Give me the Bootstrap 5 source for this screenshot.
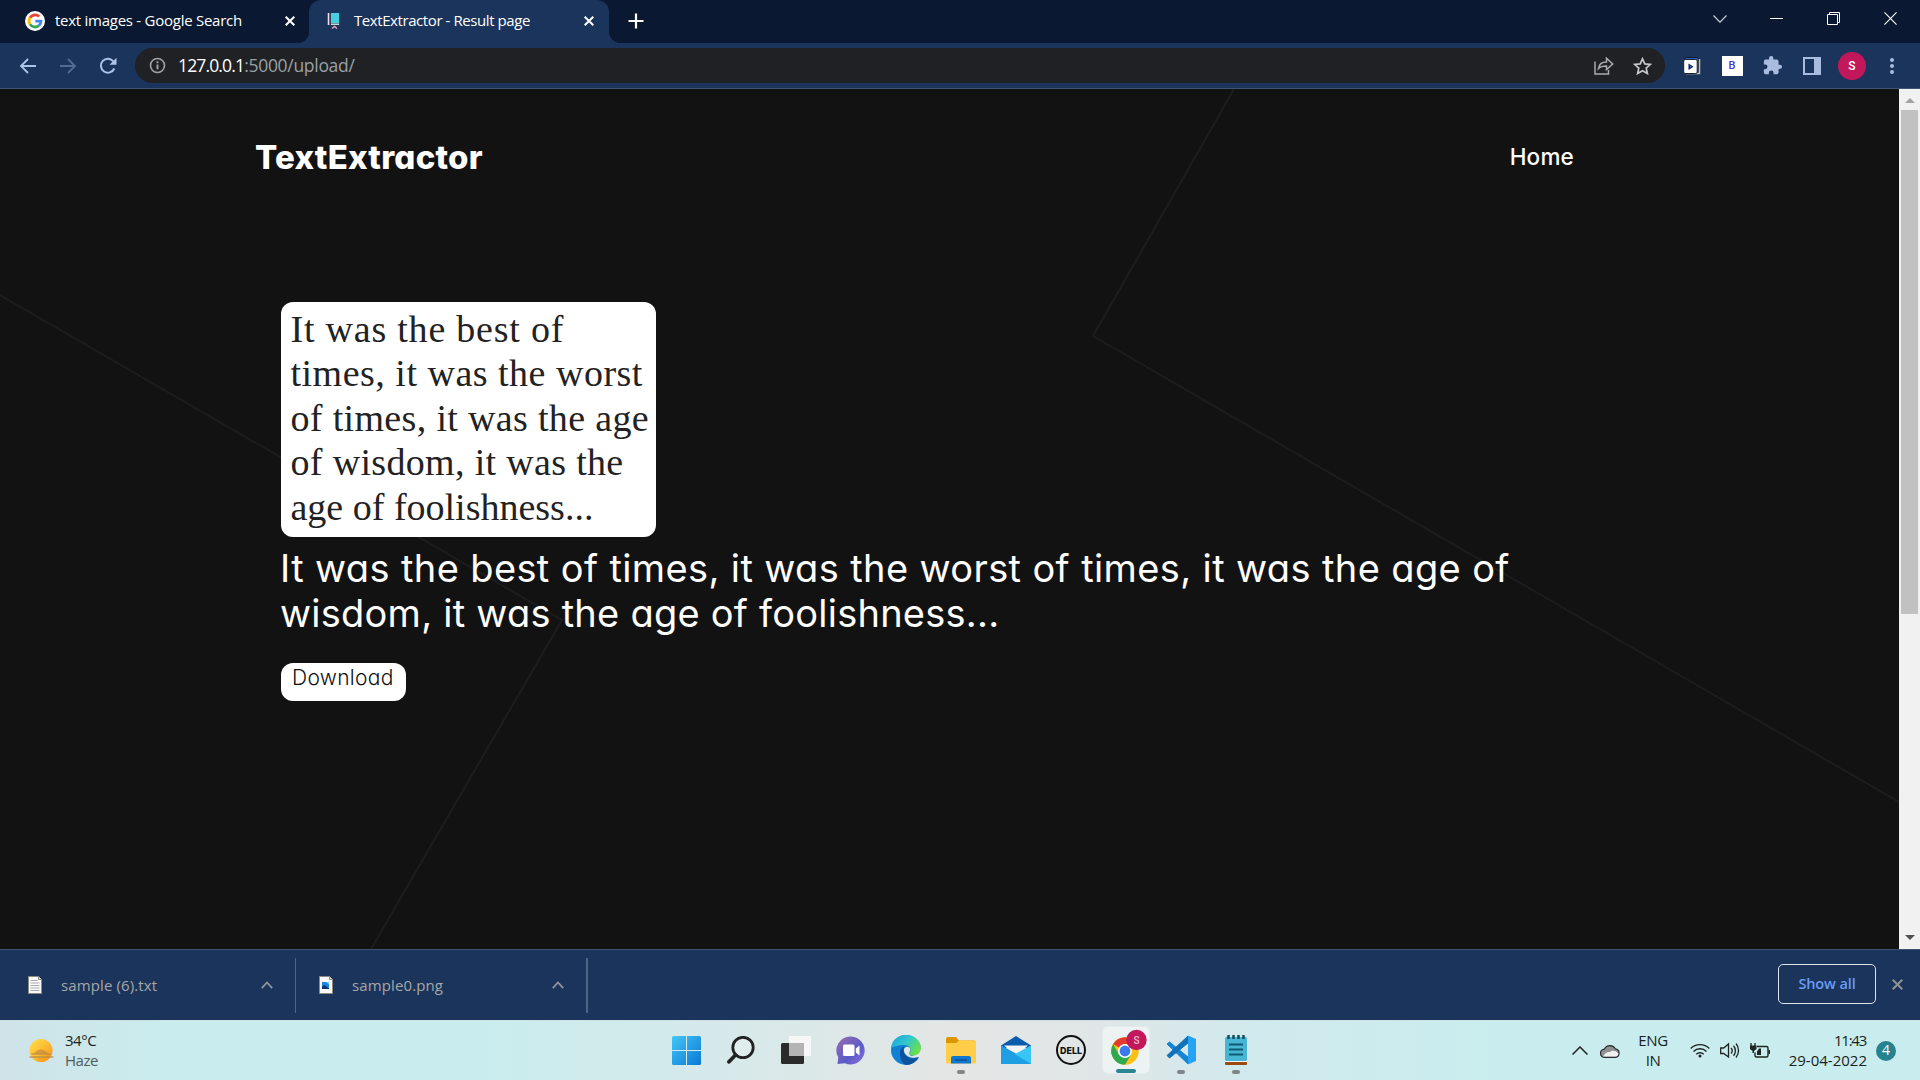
<!DOCTYPE html>
<html lang="en">
<head>
<meta charset="utf-8">
<title>TextExtractor - Result page</title>
<link href="https://cdn.jsdelivr.net/npm/bootstrap@5.3.0/dist/css/bootstrap.min.css" rel="stylesheet">
<style>
body{width:1920px;height:1080px;overflow:hidden;font-family:"Open Sans","Noto Sans",sans-serif;background:#121212;line-height:1.2}
svg{display:block;flex:none}
.txt{white-space:nowrap;display:inline-block}
.tabstrip{height:43px;background:#0a1931;color:#fff;font-size:15px}
.tab-a{width:309px;padding-left:25px;padding-right:14px;height:41px}
.tab-a .txt{margin-left:10px;letter-spacing:-.26px;padding-bottom:1px}
.tab-b{width:300px;height:43px;background:#1a345b;border-radius:12px 12px 0 0;padding:0 15px 2px 17px;position:relative}
.tab-b .txt{margin-left:12px;letter-spacing:-.42px;padding-bottom:1px}
.tab-b::before,.tab-b::after{content:"";position:absolute;bottom:0;width:12px;height:12px}
.tab-b::before{left:-12px;background:radial-gradient(circle at 0 0,transparent 12px,#1a345b 12.5px)}
.tab-b::after{right:-12px;background:radial-gradient(circle at 100% 0,transparent 12px,#1a345b 12.5px)}
.newtab{padding-left:19px;padding-bottom:1px}
.winbtns{padding-right:1px}
.winbtn{width:57px;height:37px}
.toolbar{height:46px;background:#1a345b;border-bottom:1px solid #3c5473;padding-left:8px;padding-right:8px}
.cell{width:40px;height:36px}
.omni{width:1530px;height:35px;background:#202124;border-radius:18px;margin:0 7px;padding-left:14px;padding-right:4px;font-size:17.5px;color:#fff}
.omni .hostname{margin-left:12px;letter-spacing:-.85px}
.omni .dim{color:#9aa0a6;letter-spacing:-.3px}
.ico-share{margin-right:19px}
.ico-star{margin-right:9px}
.ext-b{width:21px;height:20px;font:500 11px Roboto,sans-serif;color:#4338ca}
.ava{width:28px;height:28px;border-radius:50%;background:#c2185b;color:#fff;font:500 12px Roboto,sans-serif}
.view{height:860px}
.site{width:1899px;background:#121212;color:#fff;font-family:Inter,sans-serif;font-feature-settings:"cv11";position:relative}
.bglines{position:absolute;left:0;top:0;z-index:0}
.site>*:not(.bglines){position:relative;z-index:1}
.head{padding:49px 325px 0 255px;height:213px}
.brandname{font-size:33px;font-weight:800;line-height:38px;letter-spacing:.25px}
.homelink{font-size:22.500px;font-weight:500;line-height:37px;letter-spacing:.2px}
.result{padding-left:281px}
.scan{width:375px;height:235px;background:#fff;border-radius:12px;color:#222;font-family:"Liberation Serif",serif;font-size:38px;line-height:44.400px;padding:5px 0 0 9.500px}
.s1{letter-spacing:.78px}.s2{letter-spacing:.5px}.s3{letter-spacing:.34px}.s4{letter-spacing:.33px}
.out{font-size:38px;line-height:45px;margin-top:9px;color:#fff}
.out .o1{letter-spacing:.38px;margin-left:-1px}
.out .o2{letter-spacing:.24px;margin-left:-1px}
.dl{width:125px;height:38px;border-radius:12px;background:#fff;color:#111;font-size:21px;font-weight:300;line-height:24px;margin-top:27px;padding:3px 0 0 11px;letter-spacing:.3px}
.sbar{width:21px;background:#f1f1f1}
.arr-up{margin-top:9px}
.arr-dn{margin-bottom:9px}
.thumb{width:17px;height:504px;background:#c1c1c1;margin-top:7px}
.shelf{height:71px;background:#1a345b;border-top:1px solid #3c5473;color:#a5a7a8;font-size:15px}
.ditem{width:295px;padding-left:28px;padding-right:22px;height:70px}
.ditem .txt{margin-left:19px;letter-spacing:.12px}
.ditem.second{width:290px;padding-left:23px;padding-right:22px}
.vline{width:1px;height:55px;background:#4d6584}
.vline.end{width:2px}
.showall{width:98px;height:40px;border:1px solid #dfe3ea;border-radius:5px;color:#669df6;font-weight:600;font-size:14.500px;letter-spacing:-.12px;margin-bottom:2px}
.shelf-x{margin:0 17px 2px 16px}
.taskbar{height:60px;border-top:1px solid #cddfe1;background:linear-gradient(90deg,#cfe3e8 0,#c9edee 180px,#c9edee 480px,#d3eaeb 660px,#e4e6e5 960px,#e0e6e7 1100px,#d0eaed 1260px,#c9edee 1500px,#c9edee 100%);font-size:15px;color:#1b1f20}
.sunico{margin-left:28px}
.two{line-height:20px;padding-bottom:2px}
.weather{margin-left:9px;width:35px;letter-spacing:-.48px}
.weather .sub{color:#505b5d}
.apps{padding-left:562px;padding-bottom:1px;gap:7px}
.tb{width:48px;height:48px;position:relative}
.tb.on{background:#edf3f3;border-radius:5px;border:1px solid #e4eced}
.tb.on svg{overflow:visible}
.tb.run::after{content:"";position:absolute;bottom:0;left:20px;width:8px;height:4px;border-radius:2px;background:#7f8686}
.tb.on::after{content:"";position:absolute;bottom:0;left:13px;width:20px;height:4px;border-radius:2px;background:#2a8593}
.tray{padding-right:24px}
.ico-cloud{margin-left:12px}
.lang{margin-left:15px;width:36px;letter-spacing:-.4px}
.ico-wifi{margin-left:19px}
.ico-sys{margin-left:10px}
.clock{margin-left:16px;width:81px}
.clock .hm{letter-spacing:-1.250px;padding-right:1px}
.note{width:20px;height:20px;border-radius:50%;background:#26828f;color:#fff;font-size:14px;margin-left:9px}
</style>
<script src="https://cdn.jsdelivr.net/npm/bootstrap@5.3.0/dist/js/bootstrap.bundle.min.js"></script>
</head>
<body>
<div class="tabstrip d-flex">
  <div class="tab-a d-flex align-items-center">
    <svg width="20" height="20" viewBox="0 0 20 20"><circle cx="10" cy="10" r="10" fill="#fff"/><g fill="none" stroke-width="2.8"><path d="M14.2 5.6A6 6 0 0 0 4.9 6.9" stroke="#ea4335"/><path d="M4.9 6.9a6 6 0 0 0 0 6.2" stroke="#fbbc05"/><path d="M4.9 13.1a6 6 0 0 0 9 1.5" stroke="#34a853"/><path d="M13.9 14.6A6 6 0 0 0 16 10.2H10.3" stroke="#4285f4"/></g></svg>
    <span class="txt">text images - Google Search</span>
    <svg class="ms-auto" width="10" height="10" viewBox="0 0 10 10" stroke="#fff" stroke-width="2"><path d="M.7.7l8.600 8.600M9.300.7L.7 9.300"/></svg>
  </div>
  <div class="tab-b d-flex align-items-center">
    <svg width="16" height="18" viewBox="0 0 16 18"><path d="M1.500 1h13v12.500h-13z" fill="#35405c"/><path d="M2.500 1v12" stroke="#f0dfe6" stroke-width="1.500"/><path d="M5 1h8v10H5z" fill="#46cfdc"/><path d="M5 12.200h8" stroke="#d9f5f7" stroke-width="1.300"/><path d="M6 16.500l2.500-2 2.500 2" stroke="#e9a4b8" fill="none" stroke-width="1.500"/></svg>
    <span class="txt">TextExtractor - Result page</span>
    <svg class="ms-auto" width="10" height="10" viewBox="0 0 10 10" stroke="#fff" stroke-width="2"><path d="M.7.7l8.600 8.600M9.300.7L.7 9.300"/></svg>
  </div>
  <div class="newtab d-flex align-items-center"><svg width="16" height="16" viewBox="0 0 16 16" stroke="#fff" stroke-width="2.200"><path d="M8 .5v15M.5 8h15"/></svg></div>
  <div class="winbtns d-flex ms-auto">
    <div class="winbtn d-flex align-items-center justify-content-center"><svg width="14" height="8" viewBox="0 0 14 8" fill="none" stroke="#c6cbd3" stroke-width="1.200"><path d="M.5.5L7 7.200 13.500.5"/></svg></div>
    <div class="winbtn d-flex align-items-center justify-content-center"><svg width="13" height="2"><path d="M0 .5h13" stroke="#fff"/></svg></div>
    <div class="winbtn d-flex align-items-center justify-content-center"><svg width="13" height="13" viewBox="0 0 13 13" fill="none" stroke="#fff"><path d="M.5 2.500h10v10H.5zM2.500 2.500V.5h10v10h-2"/></svg></div>
    <div class="winbtn d-flex align-items-center justify-content-center"><svg width="13" height="13" viewBox="0 0 14 14" stroke="#fff" stroke-width="1.200"><path d="M.5.5l13 13M13.500.5l-13 13"/></svg></div>
  </div>
</div>
<div class="toolbar d-flex align-items-center">
  <div class="cell d-flex align-items-center justify-content-center"><svg width="18" height="16" viewBox="0 0 18 16" fill="none" stroke="#aec3e8" stroke-width="1.800"><path d="M17 8H2M9 1L2 8l7 7"/></svg></div>
  <div class="cell d-flex align-items-center justify-content-center"><svg width="18" height="16" viewBox="0 0 18 16" fill="none" stroke="#536c94" stroke-width="1.800"><path d="M1 8h15M9 1l7 7-7 7"/></svg></div>
  <div class="cell d-flex align-items-center justify-content-center"><svg width="18" height="18" viewBox="0 0 18 18" fill="none" stroke="#aec3e8" stroke-width="2"><path d="M15.300 11.500A7 7 0 1 1 14.500 4.500L16 6.500"/><path d="M17.500.8v7h-7z" fill="#aec3e8" stroke="none"/></svg></div>
  <div class="omni d-flex align-items-center">
    <svg width="17" height="17" viewBox="0 0 17 17" fill="none" stroke="#a0a4a8" stroke-width="1.600"><circle cx="8.500" cy="8.500" r="7"/><path d="M8.500 7.500v4.700M8.500 4.300v1.900" stroke-width="1.900"/></svg>
    <span class="txt hostname">127.0.0.1</span><span class="txt dim">:5000/upload/</span>
    <svg class="ms-auto ico-share" width="20" height="18" viewBox="0 0 20 18" fill="none" stroke="#a9abad" stroke-width="1.500"><path d="M1 4.500V17h13.500v-4"/><path d="M4.500 11.500c.5-4 3.500-6.500 8-6.500V1.200L18.700 7l-6.200 5.500V9c-4 0-6.500.7-8 2.500z"/></svg>
    <svg class="ico-star" width="19" height="18" viewBox="0 0 19 18" fill="none" stroke="#c5c7c9" stroke-width="1.700"><path d="M9.500 1.800l2.300 5.100 5.600.5-4.200 3.700 1.200 5.400-4.900-2.800-4.900 2.800 1.200-5.400-4.200-3.700 5.600-.5z"/></svg>
  </div>
  <div class="cell d-flex align-items-center justify-content-center"><svg width="18" height="18" viewBox="0 0 18 18"><rect x="1.500" y=".5" width="14" height="14" rx="2" fill="#2b5fc4" stroke="#111c2c"/><path d="M16.500 2v14.500H3" stroke="#c8bfae" stroke-width="1.500" fill="none"/><rect x=".7" y="2.500" width="13.500" height="14" rx="1.500" fill="#fff" stroke="#16202f"/><path d="M5.500 6.500v6.500l5-3.200z" fill="#12203a"/><path d="M6.800 8.500v2.600l2-1.300z" fill="#2b6fe0"/></svg></div>
  <div class="cell d-flex align-items-center justify-content-center"><div class="ext-b bg-white d-flex align-items-center justify-content-center">B</div></div>
  <div class="cell d-flex align-items-center justify-content-center"><svg width="19" height="19" viewBox="1 1 22 22" fill="#a9bcdf"><path d="M20.500 11H19V7a2 2 0 0 0-2-2h-4V3.500a2.500 2.500 0 0 0-5 0V5H4a2 2 0 0 0-2 2v3.800h1.500a2.700 2.700 0 0 1 0 5.400H2V20a2 2 0 0 0 2 2h3.800v-1.500a2.700 2.700 0 0 1 5.400 0V22H17a2 2 0 0 0 2-2v-4h1.500a2.500 2.500 0 0 0 0-5z"/></svg></div>
  <div class="cell d-flex align-items-center justify-content-center"><svg width="18" height="18" viewBox="0 0 18 18"><path d="M1 1h16v16H1z" fill="none" stroke="#a9bcdf" stroke-width="2"/><path d="M11 1v16h6V1z" fill="#a9bcdf"/></svg></div>
  <div class="cell d-flex align-items-center justify-content-center"><div class="ava d-flex align-items-center justify-content-center">S</div></div>
  <div class="cell d-flex align-items-center justify-content-center"><svg width="4" height="16" viewBox="0 0 4 16" fill="#a9bcdf"><circle cx="2" cy="2" r="2"/><circle cx="2" cy="8" r="2"/><circle cx="2" cy="14" r="2"/></svg></div>
</div>
<div class="view d-flex">
  <main class="site">
    <svg class="bglines" width="1899" height="860" fill="none" stroke="#1d1d1d" stroke-width="2"><path d="M1234 0L1093 247 1899 713M0 206L562 531 371 860"/></svg>
    <header class="head d-flex justify-content-between align-items-start">
      <span class="txt brandname">TextExtractor</span>
      <a class="txt homelink text-white text-decoration-none" href="#">Home</a>
    </header>
    <section class="result">
      <div class="scan">
        <div><span class="txt s1">It was the best of</span></div>
        <div><span class="txt s2">times, it was the worst</span></div>
        <div><span class="txt s3">of times, it was the age</span></div>
        <div><span class="txt s4">of wisdom, it was the</span></div>
        <div><span class="txt">age of foolishness...</span></div>
      </div>
      <div class="out">
        <div><span class="txt o1">It was the best of times, it was the worst of times, it was the age of</span></div>
        <div><span class="txt o2">wisdom, it was the age of foolishness...</span></div>
      </div>
      <div class="dl"><span class="txt">Download</span></div>
    </section>
  </main>
  <div class="sbar d-flex flex-column align-items-center">
    <svg class="arr-up" width="10" height="5"><path d="M0 5L5 0l5 5z" fill="#a3a3a3"/></svg>
    <div class="thumb"></div>
    <svg class="mt-auto arr-dn" width="10" height="5"><path d="M0 0h10L5 5z" fill="#505050"/></svg>
  </div>
</div>
<div class="shelf d-flex align-items-center">
  <div class="ditem d-flex align-items-center">
    <svg width="14" height="18" viewBox="0 0 14 18"><path d="M.5.5h10l3 3v14H.5z" fill="#fafafa" stroke="#8d8a80"/><path d="M10.500.5v3h3" fill="#ddd" stroke="#8d8a80"/><path d="M2.500 4.500h7M2.500 7h9M2.500 9.500h9M2.500 12h9M2.500 14.500h9" stroke="#aaa"/></svg>
    <span class="txt">sample (6).txt</span>
    <svg class="ms-auto" width="12" height="8" viewBox="0 0 12 8" fill="none" stroke="#929699" stroke-width="1.800"><path d="M.8 7.200L6 1.500l5.200 5.700"/></svg>
  </div>
  <div class="vline"></div>
  <div class="ditem second d-flex align-items-center">
    <svg width="14" height="18" viewBox="0 0 14 18"><path d="M.5.5h10l3 3v14H.5z" fill="#fafafa" stroke="#8d8a80"/><path d="M10.500.5v3h3" fill="#ddd" stroke="#8d8a80"/><path d="M3 6h7v7H3z" fill="#1b86dc"/><path d="M3 13v-2.500L5.500 9l4.500 3.500v.5z" fill="#0a3478"/><path d="M7 6h3v2.500z" fill="#6fd0f5"/></svg>
    <span class="txt">sample0.png</span>
    <svg class="ms-auto" width="12" height="8" viewBox="0 0 12 8" fill="none" stroke="#929699" stroke-width="1.800"><path d="M.8 7.200L6 1.500l5.200 5.700"/></svg>
  </div>
  <div class="vline end"></div>
  <div class="showall d-flex align-items-center justify-content-center ms-auto"><span class="txt">Show all</span></div>
  <svg class="shelf-x" width="11" height="11" viewBox="0 0 11 11" stroke="#8f9290" stroke-width="2"><path d="M.7.7l9.600 9.600M10.300.7L.7 10.300"/></svg>
</div>
<div class="taskbar d-flex align-items-center">
  <svg class="sunico" width="28" height="28" viewBox="0 0 28 28"><defs><linearGradient id="sun" x1="0" y1="0" x2="1" y2="1"><stop offset="0" stop-color="#ffe04a"/><stop offset=".5" stop-color="#fdbd33"/><stop offset="1" stop-color="#f98a06"/></linearGradient></defs><circle cx="13" cy="13.500" r="11.500" fill="url(#sun)"/><path d="M5 16.500c3-1 4-4 8-4s5 3 8 4z" fill="#c08a3e" opacity=".7"/><path d="M4 17h18M2 20h23" stroke="#b98b4b" stroke-width="1.500" stroke-linecap="round" opacity=".8"/></svg>
  <div class="two weather"><div><span class="txt">34°C</span></div><div class="sub"><span class="txt">Haze</span></div></div>
  <div class="apps d-flex">
    <div class="tb d-flex align-items-center justify-content-center"><svg width="29" height="29" viewBox="0 0 29 29"><defs><linearGradient id="win" x1="0" y1="0" x2="1" y2="1"><stop offset="0" stop-color="#45c6f8"/><stop offset="1" stop-color="#0a78d4"/></linearGradient></defs><path d="M0 1.500Q0 0 1.500 0H14v14H0zM15 0h12.500Q29 0 29 1.500V14H15zM0 15h14v14H1.500Q0 29 0 27.500zM15 15h14v12.500q0 1.500-1.500 1.500H15z" fill="url(#win)"/></svg></div>
    <div class="tb d-flex align-items-center justify-content-center"><svg width="28" height="28" viewBox="0 0 28 28" fill="none" stroke="#232323"><circle cx="16" cy="11.500" r="10.200" stroke-width="2.800" fill="#e1eced"/><path d="M8.500 19L2 25.800" stroke-width="3.800" stroke-linecap="round"/></svg></div>
    <div class="tb d-flex align-items-center justify-content-center"><svg width="30" height="28" viewBox="0 0 30 28"><rect y="7" width="23" height="21" rx="1.500" fill="#2b2b2b"/><rect x="8" width="22" height="20" rx="1" fill="#f7f7f7"/><path d="M8 7h15v13H8z" fill="#b4b4b4"/></svg></div>
    <div class="tb d-flex align-items-center justify-content-center"><svg width="30" height="29" viewBox="0 0 30 29"><defs><linearGradient id="cht" x1="0" y1="0" x2="1" y2="1"><stop offset="0" stop-color="#9a6cae"/><stop offset=".6" stop-color="#5b5bc8"/><stop offset="1" stop-color="#8c74dd"/></linearGradient></defs><path d="M15 .5a14 14 0 1 1-6 26.800L1.500 28l.8-6.500A14 14 0 0 1 15 .5z" fill="url(#cht)"/><rect x="7" y="8.500" width="11.500" height="11.500" rx="1.500" fill="#fff"/><path d="M19.800 12.500l3.700-3v10l-3.700-3z" fill="#fff"/></svg></div>
    <div class="tb d-flex align-items-center justify-content-center"><svg width="30" height="30" viewBox="0 0 30 30"><defs><linearGradient id="ed1" x1="0" y1="0" x2="1" y2=".6"><stop offset="0" stop-color="#1b9ede"/><stop offset=".5" stop-color="#2fc6cf"/><stop offset="1" stop-color="#6be04c"/></linearGradient></defs><circle cx="15" cy="15" r="15" fill="#0f80d4"/><path d="M30 13v11l-9-4z" fill="#e3e7e6"/><path d="M0 13C1 5 7 0 15 0c9 0 15 6 15 13 0 5-4 7.500-8 7.500-3 0-4-1.500-3-3 2-4-1-7.500-6-7.500-6 0-11 2-13 3z" fill="url(#ed1)"/><path d="M9 18c0-4 2.500-6.500 4.500-6.800-3 4 0 11.300 7.500 12.300 3 .3 5.500-.8 7-2C25.500 27 20 30 15.500 30 11 29 9 23 9 18z" fill="#0d529c"/><path d="M13 14.500c.8-3.500 5.500-3.500 6.200-.5.500 2-1.500 3.500-.8 5.200.8 2 5 2.500 8.600 1l1 1.300c-8 3.500-15.500-1-15-7z" fill="#e3e7e6"/></svg></div>
    <div class="tb run d-flex align-items-center justify-content-center"><svg width="30" height="27" viewBox="0 0 30 27"><path d="M0 2Q0 0 2 0h8l3 3.500h15q2 0 2 2V10H0z" fill="#dc9600"/><path d="M0 6h10l3-2.500h15q2 0 2 1.500v20q0 1.500-1.500 1.500h-27Q0 26.500 0 25z" fill="#ffcd48"/><path d="M5 26.500V21q0-2 2-2h16q2 0 2 2v5.500z" fill="#1177ce"/><path d="M9 23h12" stroke="#0b4f96" stroke-width="1.500"/></svg></div>
    <div class="tb d-flex align-items-center justify-content-center"><svg width="30" height="28" viewBox="0 0 30 28"><path d="M0 9.500L15 0l15 9.500V12H0z" fill="#0b5cab"/><path d="M3 9.500h24L15 20z" fill="#f4f4f4"/><path d="M0 9.500l15 8L0 28z" fill="#1895df"/><path d="M30 9.500l-15 8L0 28h30z" fill="#38c5f4"/><path d="M0 9.500L30 28H0z" fill="#1e9fe4"/></svg></div>
    <div class="tb d-flex align-items-center justify-content-center"><svg width="30" height="30" viewBox="0 0 30 30"><circle cx="15" cy="15" r="14" fill="none" stroke="#111" stroke-width="2"/><text x="4" y="18.500" font-family="Inter,sans-serif" font-weight="800" font-size="9.500" textLength="22" lengthAdjust="spacingAndGlyphs" fill="#111">DELL</text></svg></div>
    <div class="tb on d-flex align-items-center justify-content-center"><svg width="36" height="36" viewBox="0 0 36 36"><circle cx="17" cy="19" r="13.800" fill="#fbc116"/><path d="M17 19L5.100 12A13.800 13.800 0 0 1 28.900 12H17z" fill="#e33b2e"/><path d="M5.100 12A13.800 13.800 0 0 0 17 32.800l6-10.300L11 22.500z" fill="#2da94f"/><circle cx="17" cy="19" r="7" fill="#fff"/><circle cx="17" cy="19" r="5.400" fill="#3a79ee"/><circle cx="28.500" cy="8" r="10.200" fill="#c2185b"/><text x="28.500" y="11.700" text-anchor="middle" font-family="Roboto,sans-serif" font-weight="500" font-size="10" fill="#f5b7cf">S</text></svg></div>
    <div class="tb run d-flex align-items-center justify-content-center"><svg width="30" height="30" viewBox="0 0 30 30"><path d="M1 9l2.500-2L22 22v7z" fill="#1485d1" stroke="#1485d1" stroke-linejoin="round"/><path d="M1 20.500l2.500 2.500L22 8V1z" fill="#0f72bb" stroke="#0f72bb" stroke-linejoin="round"/><path d="M22 .5l8 3.500v22l-8 3.500z" fill="#27a3f3"/></svg></div>
    <div class="tb run d-flex align-items-center justify-content-center"><svg width="22" height="30" viewBox="0 0 22 30"><path d="M0 27h22v2q0 1-1 1H1q-1 0-1-1z" fill="#9b4c0c"/><path d="M0 25h22v2H0z" fill="#f5f5f5"/><rect y="2" width="22" height="24" rx="1.500" fill="#46b6d4"/><path d="M4 9.500h14M4 14.500h14M4 19.500h14" stroke="#0e5a74" stroke-width="1.800"/><path d="M3.500 0v4M8.500 0v4M13.500 0v4M18.500 0v4" stroke="#174a5a" stroke-width="2.500"/></svg></div>
  </div>
  <div class="tray d-flex align-items-center ms-auto">
    <svg width="16" height="9" viewBox="0 0 16 9" fill="none" stroke="#222" stroke-width="1.500"><path d="M.5 8.500L8 1l7.500 7.500"/></svg>
    <svg class="ico-cloud" width="20" height="14" viewBox="0 0 20 14"><path d="M4.700 13.300a4.100 4.100 0 0 1-.3-8.200A6.200 6.200 0 0 1 15.300 4.800a4.300 4.300 0 0 1 .2 8.500z" fill="#8e9192" stroke="#2a2c2d" stroke-width="1.200"/><path d="M3 12.500c2-4 5-5 7-4.500 2-1.500 5-2 8.500 1.500-.5 2-1.500 3-3 3z" fill="#f0f0f0"/></svg>
    <div class="two lang text-center"><div><span class="txt">ENG</span></div><div><span class="txt">IN</span></div></div>
    <svg class="ico-wifi" width="20" height="15" viewBox="0 0 20 15" fill="none" stroke="#1f2323" stroke-width="1.400"><path d="M.7 5.500a13 13 0 0 1 18.600 0M3.500 8.500a9.200 9.200 0 0 1 13 0M6.300 11.300a5.300 5.300 0 0 1 7.400 0"/><circle cx="10" cy="13" r="1.500" fill="#1f2323" stroke="none"/></svg>
    <svg class="ico-sys" width="20" height="17" viewBox="0 0 20 17" fill="none" stroke="#1f2323" stroke-width="1.300"><path d="M.7 6h3L8.500 2v13L3.700 11.500h-3zM11 6a4 4 0 0 1 0 5.500M13.500 3.700a7.500 7.500 0 0 1 0 10M16 1.500a11 11 0 0 1 0 14"/></svg>
    <svg class="ico-sys" width="20" height="16" viewBox="0 0 20 16"><path d="M7 3.500h9.500q1.500 0 1.500 1.500v7.500q0 1.500-1.500 1.500h-10Q5 14 5 12.500V9.500" fill="none" stroke="#1f2323" stroke-width="1.400"/><path d="M18.500 7h1.500v4h-1.500zM7 12V8.500l2-3h2V12z" fill="#1f2323"/><path d="M1 0v3M5 0v3" stroke="#1f2323" stroke-width="1.300"/><path d="M0 2.500h6.500V6L4 8v2H2.500V8L0 6z" fill="#1f2323"/></svg>
    <div class="two clock text-end"><div><span class="txt hm">11:43</span></div><div><span class="txt">29-04-2022</span></div></div>
    <div class="note d-flex align-items-center justify-content-center">4</div>
  </div>
</div>
</body>
</html>
